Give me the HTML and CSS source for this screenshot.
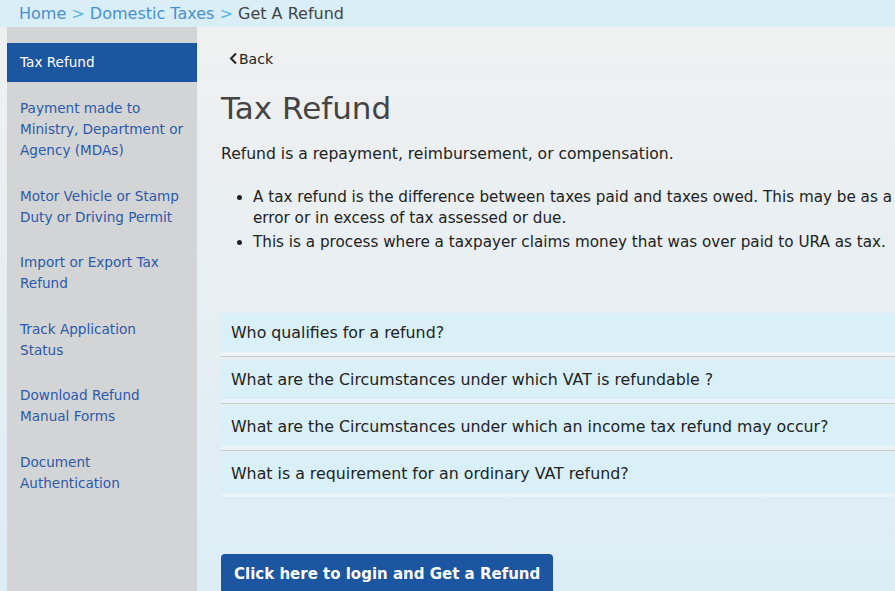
FILE: index.html
```html
<!DOCTYPE html>
<html lang="en">
<head>
    <meta charset="UTF-8">
    <meta name="viewport" content="width=device-width, initial-scale=1.0">
    <title>Get A Refund</title>
    <link rel="stylesheet" href="styles.css">
</head>
<body>
    <nav class="breadcrumb">
        <a href="#">Home</a>
        <span class="sep">&gt;</span>
        <a href="#">Domestic Taxes</a>
        <span class="sep">&gt;</span>
        <span class="current">Get A Refund</span>
    </nav>
    <div class="page">
        <aside class="sidebar">
            <a href="#" class="side-link active">Tax Refund</a>
            <a href="#" class="side-link">Payment made to<br>Ministry, Department or<br>Agency (MDAs)</a>
            <a href="#" class="side-link">Motor Vehicle or Stamp<br>Duty or Driving Permit</a>
            <a href="#" class="side-link">Import or Export Tax<br>Refund</a>
            <a href="#" class="side-link">Track Application<br>Status</a>
            <a href="#" class="side-link">Download Refund<br>Manual Forms</a>
            <a href="#" class="side-link">Document<br>Authentication</a>
        </aside>
        <main class="content">
            <a href="#" class="back">
                <svg width="9" height="13" viewBox="0 0 9 13"><path d="M7 1.5 L2 6.5 L7 11.5" fill="none" stroke="#222" stroke-width="2"/></svg>Back
            </a>
            <h1>Tax Refund</h1>
            <p class="intro">Refund is a repayment, reimbursement, or compensation.</p>
            <ul class="points">
                <li>A tax refund is the difference between taxes paid and taxes owed. This may be as a result of tax paid in<br>error or in excess of tax assessed or due.</li>
                <li>This is a process where a taxpayer claims money that was over paid to URA as tax.</li>
            </ul>
            <div class="faq">
                <div class="faq-item"><div class="faq-head">Who qualifies for a refund?</div></div>
                <div class="faq-item"><div class="faq-head">What are the Circumstances under which VAT is refundable ?</div></div>
                <div class="faq-item"><div class="faq-head">What are the Circumstances under which an income tax refund may occur?</div></div>
                <div class="faq-item last"><div class="faq-head">What is a requirement for an ordinary VAT refund?</div></div>
            </div>
            <a href="#" class="refund-btn">Click here to login and Get a Refund</a>
        </main>
    </div>
</body>
</html>
```

FILE: styles.css
```css
* {
    box-sizing: border-box;
}

body {
    margin: 0;
    font-family: "DejaVu Sans", Verdana, sans-serif;
    background-color: #eef2f4;
    color: #222;
    overflow: hidden;
}

a {
    text-decoration: none;
}

.breadcrumb {
    height: 27px;
    background-color: #d9eef7;
    padding: 4px 0 0 19px;
    font-size: 16px;
    line-height: 19px;
    color: #444;
    white-space: nowrap;
}

.breadcrumb a {
    color: #4a90d0;
}

.breadcrumb .sep {
    color: #5fb4e0;
}

.page {
    display: flex;
    padding-left: 7px;
    min-height: 564px;
    background: linear-gradient(to bottom, #f0f0f0, #dcedf6);
}

.sidebar {
    width: 190px;
    flex-shrink: 0;
    background-color: #d3d4d6;
    padding-top: 16px;
    display: flex;
    flex-direction: column;
}

.side-link {
    display: block;
    color: #2a5aa8;
    font-size: 13.6px;
    line-height: 21px;
    white-space: nowrap;
    padding: 0 4px 24.5px 13px;
}

.side-link.active {
    background-color: #1c55a0;
    color: #fff;
    padding-top: 9px;
    padding-bottom: 9px;
    margin-bottom: 16px;
}

.content {
    flex: 1;
    min-width: 0;
    padding: 23px 0 0 24px;
    white-space: nowrap;
}

.back {
    display: inline-flex;
    align-items: center;
    gap: 1px;
    color: #222;
    font-size: 14px;
    margin-left: 8px;
}

.content h1 {
    font-size: 31px;
    line-height: 36px;
    font-weight: normal;
    color: #444;
    margin: 21px 0 0 0;
}

.intro {
    font-size: 15.6px;
    line-height: 20px;
    margin: 18px 0 0 0;
}

.points {
    margin: 23px 0 0 0;
    padding-left: 32px;
    font-size: 15.2px;
    line-height: 21px;
}

.points li + li {
    margin-top: 3px;
}

.faq {
    margin-top: 60px;
}

.faq-item {
    background-color: rgba(255, 255, 255, 0.25);
    border-bottom: 1px solid #c9cccd;
    padding-bottom: 4px;
    margin-bottom: 3px;
}

.faq-item.last {
    border-bottom: none;
}

.faq-head {
    background-color: #d9f0f8;
    height: 39px;
    line-height: 39px;
    padding-left: 10px;
    font-size: 15.8px;
    color: #222;
}

.refund-btn {
    display: inline-block;
    margin-top: 54px;
    background-color: #1c55a0;
    color: #fff;
    font-size: 15px;
    font-weight: bold;
    padding: 11px 13px 14px 13px;
    border-radius: 4px;
}
```
